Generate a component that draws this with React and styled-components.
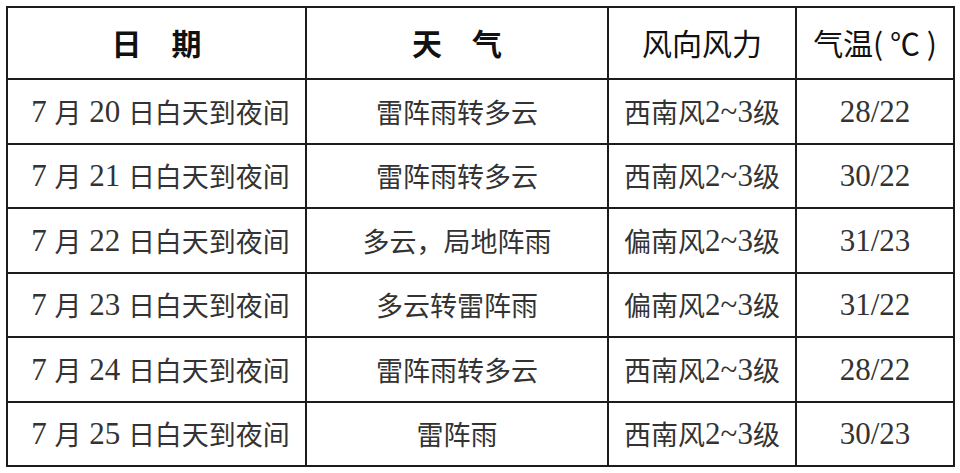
import { styled, createGlobalStyle } from "styled-components";

const rows = [
  { date: "7 月 20 日白天到夜间", weather: "雷阵雨转多云", wind: "西南风2~3级", temp: "28/22" },
  { date: "7 月 21 日白天到夜间", weather: "雷阵雨转多云", wind: "西南风2~3级", temp: "30/22" },
  { date: "7 月 22 日白天到夜间", weather: "多云，局地阵雨", wind: "偏南风2~3级", temp: "31/23" },
  { date: "7 月 23 日白天到夜间", weather: "多云转雷阵雨", wind: "偏南风2~3级", temp: "31/22" },
  { date: "7 月 24 日白天到夜间", weather: "雷阵雨转多云", wind: "西南风2~3级", temp: "28/22" },
  { date: "7 月 25 日白天到夜间", weather: "雷阵雨", wind: "西南风2~3级", temp: "30/23" },
];

// latin runs (digits, spaces, ~, /) are set larger in the serif face, like the source doc
function Mixed({ text }) {
  return text.split(/([0-9~/ ]+)/).map((part, i) =>
    /^[0-9~/ ]+$/.test(part) ? <Num key={i}>{part}</Num> : part
  );
}

function App() {
  return (
    <>
      <GlobalStyle />
      <Page>
        <Table>
          <Head>日　期</Head>
          <Head>天　气</Head>
          <Head $light>风向风力</Head>
          <Head $light>气温( ℃ )</Head>
          {rows.map((r) => (
            <Row key={r.date}>
              <Cell $shift={8}><Mixed text={r.date} /></Cell>
              <Cell>{r.weather}</Cell>
              <Cell><Mixed text={r.wind} /></Cell>
              <Cell><Mixed text={r.temp} /></Cell>
            </Row>
          ))}
        </Table>
      </Page>
    </>
  );
}

export default App;

const GlobalStyle = createGlobalStyle`
  body {
    margin: 0;
    background: #fff;
  }
`;

const Page = styled.div`
  width: 960px;
  height: 473px;
  padding: 6px 0 0 6px;
  box-sizing: border-box;
  background: #fff;
`;

const Table = styled.div`
  display: grid;
  grid-template-columns: 299px 302px 188px 158px;
  grid-template-rows: 72px repeat(6, 64.5px);
  width: fit-content;
  border-top: 2px solid #1c1c1c;
  border-left: 2px solid #1c1c1c;
`;

const Row = styled.div`
  display: contents;
`;

const Head = styled.div`
  display: flex;
  align-items: center;
  justify-content: center;
  padding-bottom: 2px;
  border-right: 2px solid #1c1c1c;
  border-bottom: 2px solid #1c1c1c;
  font-family: "Noto Sans CJK SC", sans-serif;
  font-size: 30px;
  font-weight: ${(p) => (p.$light ? 400 : 600)};
  color: #111;
  white-space: pre;
`;

const Cell = styled.div`
  display: flex;
  align-items: center;
  justify-content: center;
  padding-left: ${(p) => p.$shift || 0}px;
  border-right: 2px solid #1c1c1c;
  border-bottom: 2px solid #1c1c1c;
  font-family: "Noto Sans CJK SC", sans-serif;
  font-size: 27px;
  font-weight: 400;
  color: #333;
  white-space: pre;
`;

const Num = styled.span`
  font-family: "Liberation Serif", serif;
  font-size: 31px;
  line-height: 1;
`;
